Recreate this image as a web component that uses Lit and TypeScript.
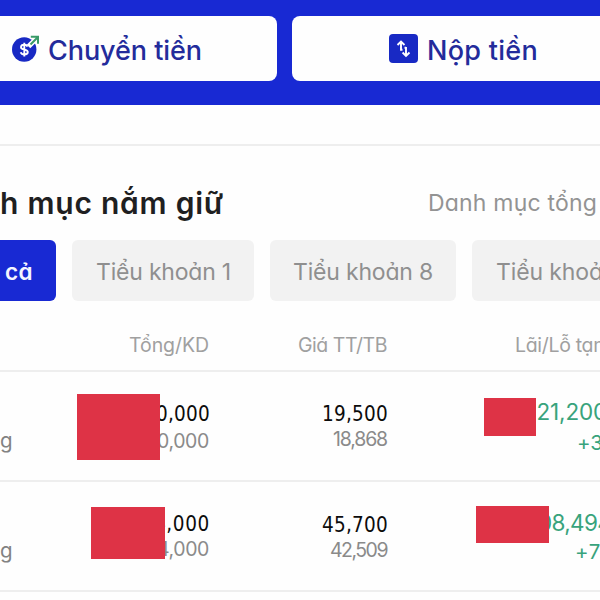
import { LitElement, html, css } from "lit";
import { customElement, property } from "lit/decorators.js";

/** A single line of text whose tracking is adjusted to fill a given width. */
@customElement("fit-text")
class FitText extends LitElement {
  @property({ type: Number }) width = 0;
  @property() text = "";

  static styles = css`
    :host { display: block; flex: none; white-space: pre; }
    .t { display: inline-block; }
  `;

  updated() {
    const el = this.renderRoot.querySelector(".t") as HTMLElement;
    el.style.letterSpacing = "0px";
    const natural = el.getBoundingClientRect().width;
    el.style.letterSpacing = `${(this.width - natural) / [...this.text].length}px`;
  }

  render() {
    return html`<span class="t">${this.text}</span>`;
  }
}

interface Holding {
  name: string;
  total: string;
  available: string;
  price: string;
  cost: string;
  gain: string;
  gainWidth: number;
  percent: string;
}

const holdings: Holding[] = [
  { name: "g", total: "0,000", available: "0,000", price: "19,500", cost: "18,868", gain: "221,200", gainWidth: 84, percent: "+3" },
  { name: "g", total: "4,000", available: "4,000", price: "45,700", cost: "42,509", gain: "08,494", gainWidth: 73, percent: "+7" },
];

@customElement("app-root")
class AppRoot extends LitElement {
  static styles = css`
    :host {
      display: block;
      width: 600px;
      height: 600px;
      overflow: hidden;
      background: #fefefe;
      font-family: Inter, "Noto Sans", sans-serif;
      font-feature-settings: "cv11" 1, "calt" 0;
      color: #8d8d8d;
    }
    * { box-sizing: border-box; }
    .actions {
      display: flex;
      gap: 15px;
      height: 105px;
      padding: 16px 0 24px;
      background: #1829d3;
    }
    .action {
      display: flex;
      align-items: center;
      flex: none;
      height: 65px;
      background: #fefefe;
      color: #232b9b;
      font-size: 27px;
      font-weight: 500;
      line-height: 34px;
    }
    .send { width: 277px; padding-left: 11px; gap: 7px; border-radius: 0 8px 8px 0; }
    .deposit { width: 340px; padding-left: 97px; gap: 9px; border-radius: 8px; }
    .action fit-text { padding-top: 4px; }
    svg { display: block; flex: none; }
    .spacer { height: 39px; }
    .rule { height: 2px; background: #eeeeee; }
    .heading {
      display: flex;
      justify-content: space-between;
      height: 94px;
      padding: 37px 3px 0 0;
      line-height: 40px;
    }
    h2 { margin: 0; color: #1f1f21; font-size: 30px; font-weight: 600; line-height: 40px; }
    .link { font-size: 23px; color: #939393; }
    .tabs { display: flex; gap: 16px; height: 61px; }
    .tab {
      flex: none;
      height: 61px;
      padding: 2px 0 0 24px;
      border-radius: 6px;
      background: #f2f2f2;
      font-size: 23px;
      line-height: 60px;
      color: #8f8f8f;
    }
    .all { width: 56px; padding-left: 5px; border-radius: 0 6px 6px 0; background: #1829d3; color: #f4f5ff; font-weight: 600; font-size: 22.5px; }
    .one { width: 182px; }
    .eight { width: 186px; padding-left: 23px; }
    .more { width: 186px; }
    .columns {
      display: grid;
      grid-template-columns: 209px 178px 213px;
      height: 69px;
      padding-top: 31px;
      font-size: 19.5px;
      line-height: 26px;
      color: #a0a0a0;
      justify-items: end;
    }
    .columns .last { justify-self: start; padding-left: 128px; }
    .row {
      position: relative;
      display: grid;
      grid-template-columns: 20px 190px 178px 212px;
      height: 108px;
      font-size: 19.5px;
      line-height: 26px;
    }
    .cell { display: flex; flex-direction: column; align-items: flex-end; }
    .name { padding-top: 56px; align-items: flex-start; color: #828282; font-size: 20.5px; }
    .main { font-family: "DejaVu Sans Condensed", "DejaVu Sans", sans-serif; font-stretch: condensed; font-size: 20.5px; color: #0c0c0c; }
    .sub { color: #8a8a8a; padding-right: 1px; }
    .r0 .qty { padding-top: 29px; gap: 1px; }
    .r0 .price { padding-top: 29px; }
    .r0 .price .sub { margin-top: -1px; }
    .r0 .gain { padding-top: 27px; gap: 5px; }
    .r1 .qty { padding-top: 29px; }
    .r1 .price { padding-top: 30px; }
    .r1 .price .sub, .r1 .qty .sub { margin-top: -1px; }
    .r1 .gain { padding-top: 28px; gap: 3px; }
    .gain { align-items: flex-start; color: #38a37c; font-size: 22.5px; }
    .r0 .amount { padding-left: 135px; }
    .r1 .amount { padding-left: 150px; }
    .percent { font-size: 20.5px; }
    .r0 .percent { padding-left: 189px; }
    .r1 .percent { padding-left: 187px; }
    .mask { position: absolute; background: #de3346; }
    .r0 .mask-qty { left: 77px; top: 22px; width: 83px; height: 66px; }
    .r0 .mask-gain { left: 484px; top: 26px; width: 52px; height: 38px; }
    .r1 .mask-qty { left: 91px; top: 25px; width: 74px; height: 52px; }
    .r1 .mask-gain { left: 476px; top: 24px; width: 73px; height: 37px; }
  `;

  private row(h: Holding, i: number) {
    return html`
      <div class="row r${i}">
        <div class="cell name"><span>${h.name}</span></div>
        <div class="cell qty">
          <fit-text class="main" width=${i ? 56 : 54} text=${h.total}></fit-text>
          <fit-text class="sub" width="52" text=${h.available}></fit-text>
        </div>
        <div class="cell price">
          <fit-text class="main" width="66" text=${h.price}></fit-text>
          <fit-text class="sub" width=${i ? 57 : 54} text=${h.cost}></fit-text>
        </div>
        <div class="cell gain">
          <fit-text class="amount" width=${h.gainWidth} text=${h.gain}></fit-text>
          <fit-text class="percent" width="26" text=${h.percent}></fit-text>
        </div>
        <div class="mask mask-qty"></div>
        <div class="mask mask-gain"></div>
      </div>
      <div class="rule"></div>
    `;
  }

  render() {
    return html`
      <div class="actions">
        <div class="action send">
          <svg width="30" height="30" viewBox="0 0 30 30" fill="none">
            <circle cx="13.2" cy="15.5" r="12.2" fill="#1829c4" />
            <path d="M17.5 12.5 27 3M19.5 2.8H27.2V10" stroke="#fefefe" stroke-width="5" />
            <path d="M19.5 10.5 26.5 3.5M19.8 2.8H27V9.8" stroke="#399a68" stroke-width="2" />
            <path d="M16.5 12.6C16 11.3 14.8 10.8 13.3 10.8C11.4 10.8 10 11.7 10 13.2C10 16.6 16.8 14.6 16.8 18C16.8 19.6 15.3 20.4 13.4 20.4C11.5 20.4 10.2 19.7 9.7 18.2M13.3 8.7V22.5" stroke="#fefefe" stroke-width="1.9" />
          </svg>
          <fit-text width="154" text="Chuyển tiền"></fit-text>
        </div>
        <div class="action deposit">
          <svg width="29" height="29" viewBox="0 0 29 29" fill="none">
            <rect width="29" height="29" rx="4" fill="#1829c4" />
            <path d="M12 16.8V8M8.5 11 12 7.5 15.5 11M12 15.8H13.5M17 13V21.5M13.6 18.5 17 22 20.5 18.5M17 13.8H15.5" stroke="#fefefe" stroke-width="1.9" />
          </svg>
          <fit-text width="111" text="Nộp tiền"></fit-text>
        </div>
      </div>
      <div class="spacer"></div>
      <div class="rule"></div>
      <div class="heading">
        <h2><fit-text width="224" text="h mục nắm giữ"></fit-text></h2>
        <fit-text class="link" width="169" text="Danh mục tổng"></fit-text>
      </div>
      <div class="tabs">
        <div class="tab all"><fit-text width="28" text="cả"></fit-text></div>
        <div class="tab one"><fit-text width="135" text="Tiểu khoản 1"></fit-text></div>
        <div class="tab eight"><fit-text width="140" text="Tiểu khoản 8"></fit-text></div>
        <div class="tab more"><fit-text width="107" text="Tiểu khoả"></fit-text></div>
      </div>
      <div class="columns">
        <fit-text width="80" text="Tổng/KD"></fit-text>
        <fit-text width="89" text="Giá TT/TB"></fit-text>
        <fit-text class="last" width="95" text="Lãi/Lỗ tạm"></fit-text>
      </div>
      <div class="rule"></div>
      ${holdings.map((h, i) => this.row(h, i))}
    `;
  }
}
